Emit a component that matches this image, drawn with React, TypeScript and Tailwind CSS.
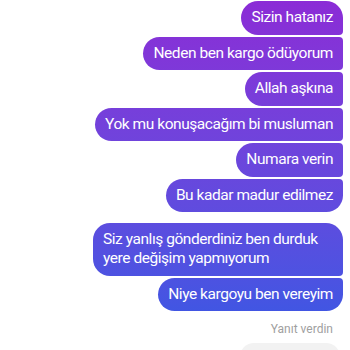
import React from "react";

type Msg = { text: string; top: boolean; bottom: boolean };

const groups: Msg[][] = [
  [
    { text: "Sizin hatanız", top: true, bottom: false },
    { text: "Neden ben kargo ödüyorum", top: false, bottom: false },
    { text: "Allah aşkına", top: false, bottom: false },
    { text: "Yok mu konuşacağım bi musluman", top: false, bottom: false },
    { text: "Numara verin", top: false, bottom: false },
    { text: "Bu kadar madur edilmez", top: false, bottom: true },
  ],
  [
    { text: "Siz yanlış gönderdiniz ben durduk yere değişim yapmıyorum", top: true, bottom: false },
    { text: "Niye kargoyu ben vereyim", top: false, bottom: true },
  ],
];

function Bubble({ m }: { m: Msg }) {
  const corners = m.top
    ? m.bottom
      ? "rounded-[17px]"
      : "rounded-l-[17px] rounded-tr-[17px] rounded-br-[4px]"
    : m.bottom
    ? "rounded-l-[17px] rounded-br-[17px] rounded-tr-[4px]"
    : "rounded-l-[17px] rounded-r-[4px]";
  return (
    <div
      className={`max-w-[250px] px-[10px] py-[7.25px] text-[15.5px] tracking-[-0.45px] leading-[19px] text-white bg-fixed bg-linear-to-b from-[#8b2bd6] to-[#3059e4] ${corners}`}
    >
      {m.text}
    </div>
  );
}

export default function App() {
  return (
    <div
      className="w-[350px] h-[350px] overflow-hidden bg-white pt-[1px] pr-[7px]"
      style={{ fontFamily: "Roboto, 'Noto Sans', sans-serif" }}
    >
      <div className="flex flex-col items-end gap-[11px]">
        {groups.map((g, i) => (
          <div key={i} className="flex flex-col items-end gap-[2px]">
            {g.map((m, j) => (
              <Bubble key={j} m={m} />
            ))}
          </div>
        ))}
      </div>
      <div className="mt-[11px] pr-[10px] text-right text-[12px] leading-[14px] text-[#a0a0a0]">
        Yanıt verdin
      </div>
      <div className="flex justify-end pr-[3px] mt-[7px]">
        <div className="w-[100px] h-[30px] rounded-t-[14px] bg-[#f2f2f2]" />
      </div>
    </div>
  );
}
